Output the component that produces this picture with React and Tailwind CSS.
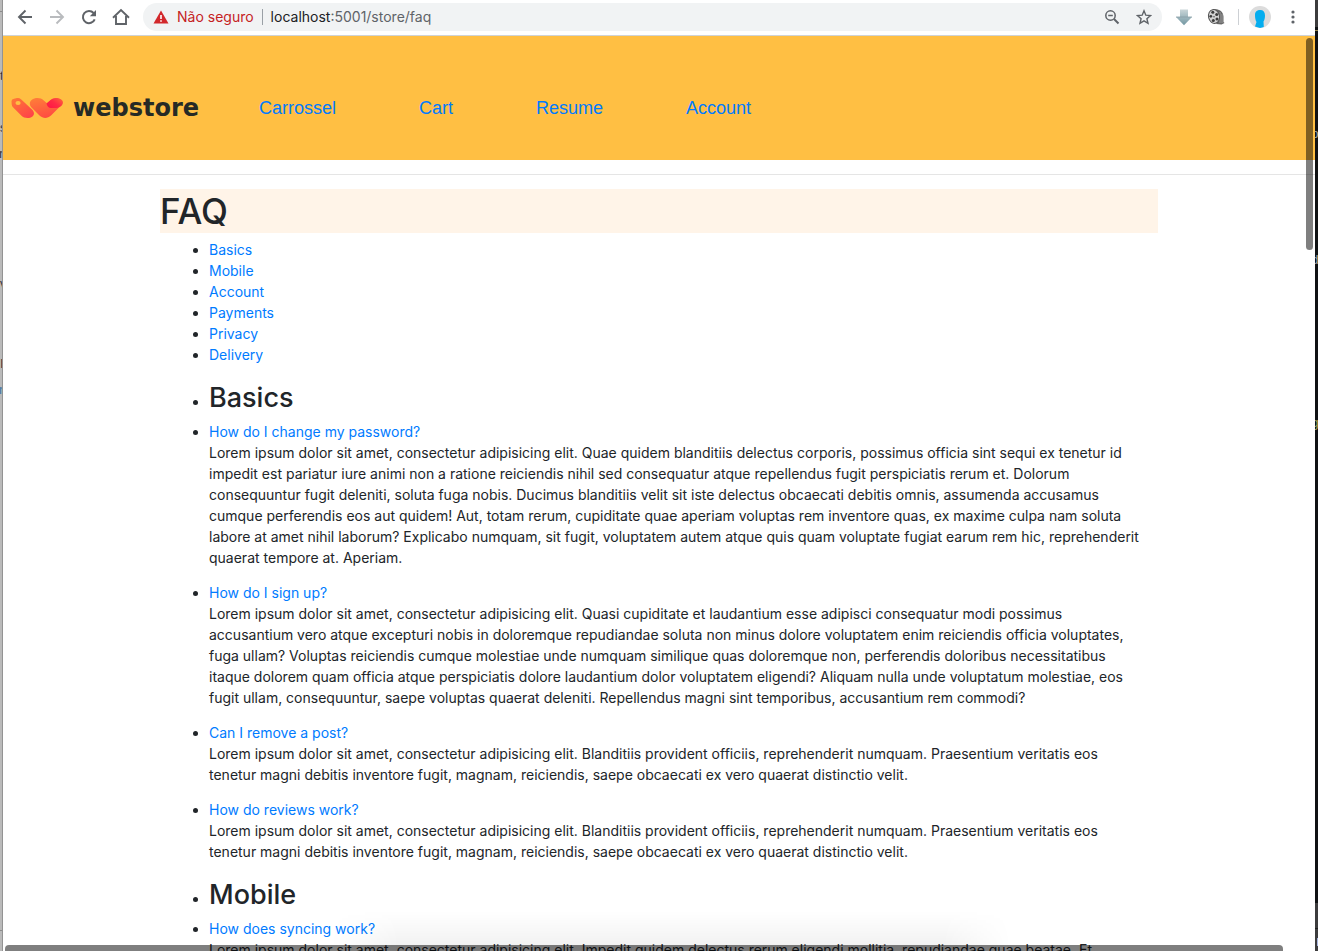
import React from "react";

const topics = ["Basics", "Mobile", "Account", "Payments", "Privacy", "Delivery"];

const navItems = ["Carrossel", "Cart", "Resume", "Account"];

const shortAnswer = [
  "Lorem ipsum dolor sit amet, consectetur adipisicing elit. Blanditiis provident officiis, reprehenderit numquam. Praesentium veritatis eos",
  "tenetur magni debitis inventore fugit, magnam, reiciendis, saepe obcaecati ex vero quaerat distinctio velit.",
];

const sections = [
  {
    title: "Basics",
    entries: [
      {
        question: "How do I change my password?",
        answer: [
          "Lorem ipsum dolor sit amet, consectetur adipisicing elit. Quae quidem blanditiis delectus corporis, possimus officia sint sequi ex tenetur id",
          "impedit est pariatur iure animi non a ratione reiciendis nihil sed consequatur atque repellendus fugit perspiciatis rerum et. Dolorum",
          "consequuntur fugit deleniti, soluta fuga nobis. Ducimus blanditiis velit sit iste delectus obcaecati debitis omnis, assumenda accusamus",
          "cumque perferendis eos aut quidem! Aut, totam rerum, cupiditate quae aperiam voluptas rem inventore quas, ex maxime culpa nam soluta",
          "labore at amet nihil laborum? Explicabo numquam, sit fugit, voluptatem autem atque quis quam voluptate fugiat earum rem hic, reprehenderit",
          "quaerat tempore at. Aperiam.",
        ],
      },
      {
        question: "How do I sign up?",
        answer: [
          "Lorem ipsum dolor sit amet, consectetur adipisicing elit. Quasi cupiditate et laudantium esse adipisci consequatur modi possimus",
          "accusantium vero atque excepturi nobis in doloremque repudiandae soluta non minus dolore voluptatem enim reiciendis officia voluptates,",
          "fuga ullam? Voluptas reiciendis cumque molestiae unde numquam similique quas doloremque non, perferendis doloribus necessitatibus",
          "itaque dolorem quam officia atque perspiciatis dolore laudantium dolor voluptatem eligendi? Aliquam nulla unde voluptatum molestiae, eos",
          "fugit ullam, consequuntur, saepe voluptas quaerat deleniti. Repellendus magni sint temporibus, accusantium rem commodi?",
        ],
      },
      { question: "Can I remove a post?", answer: shortAnswer },
      { question: "How do reviews work?", answer: shortAnswer },
    ],
  },
  {
    title: "Mobile",
    entries: [
      {
        question: "How does syncing work?",
        answer: [
          "Lorem ipsum dolor sit amet, consectetur adipisicing elit. Impedit quidem delectus rerum eligendi mollitia, repudiandae quae beatae. Et",
        ],
      },
    ],
  },
];

function ToolButton({ label, children }) {
  return (
    <button type="button" aria-label={label} className="flex size-6 shrink-0 items-center justify-center">
      {children}
    </button>
  );
}

function BrowserBar() {
  return (
    <div className="flex h-9 shrink-0 items-center border-b border-[#cfd3d6] bg-white px-2.5 pb-0.5 font-[Inter,sans-serif]">
      <div className="flex items-center gap-2">
        <ToolButton label="Back">
          <svg width="16" height="16" viewBox="0 0 16 16" fill="none" stroke="#5f6368" strokeWidth="1.9">
            <path d="M15 8H2.5M8.5 1.5 2 8l6.500 6.500" />
          </svg>
        </ToolButton>
        <ToolButton label="Forward">
          <svg width="16" height="16" viewBox="0 0 16 16" fill="none" stroke="#b9bbbe" strokeWidth="1.9">
            <path d="M1 8h12.500M7.500 1.500 14 8l-6.500 6.500" />
          </svg>
        </ToolButton>
        <ToolButton label="Reload">
          <svg width="16" height="16" viewBox="0 0 16 16" fill="none">
            <path d="M13.700 10.300A6.100 6.100 0 1 1 12.600 4" stroke="#5f6368" strokeWidth="2" />
            <path d="M15 1v6.200H8.800z" fill="#5f6368" />
          </svg>
        </ToolButton>
        <ToolButton label="Home">
          <svg width="18" height="18" viewBox="0 0 18 18" fill="none" stroke="#5f6368" strokeWidth="1.9">
            <path d="M1 9.700 9 2l8 7.700M4 8v8h10V8" />
          </svg>
        </ToolButton>
      </div>
      <div className="ml-2.5 flex h-7 min-w-0 flex-1 items-center rounded-full bg-[#f1f3f4] pr-1.5 pl-2.5">
        <svg width="16" height="14" viewBox="0 0 16 14" className="shrink-0">
          <path d="M8 .5 15.500 13.500H.5z" fill="#d2282c" />
          <path d="M7.200 5h1.600v4H7.200zM7.200 10.200h1.600v1.600H7.200z" fill="#fff" />
        </svg>
        <span className="ml-2 text-sm whitespace-nowrap text-[#c5221f]">Não seguro</span>
        <span className="mx-2 h-4 w-px bg-[#9aa0a6]" />
        <label htmlFor="address" className="text-sm text-[#202124]">
          localhost
        </label>
        <input
          id="address"
          className="min-w-0 flex-1 bg-transparent text-sm text-[#5f6368] outline-none"
          defaultValue=":5001/store/faq"
        />
        <div className="flex items-center gap-2">
          <ToolButton label="Zoom">
            <svg width="16" height="16" viewBox="0 0 16 16" fill="none" stroke="#5f6368" strokeWidth="1.500">
              <circle cx="6.500" cy="6.500" r="4.700" />
              <path d="M4.200 6.500h4.600" />
              <path d="m10 10 4.500 4.500" strokeWidth="1.900" />
            </svg>
          </ToolButton>
          <ToolButton label="Bookmark">
            <svg width="16" height="16" viewBox="0 0 16 16" fill="none" stroke="#5f6368" strokeWidth="1.400">
              <path d="m8 1.800 1.800 4.400 4.700.4-3.600 3.100 1.100 4.600L8 11.800l-4 2.500 1.100-4.600L1.500 6.600l4.700-.4z" />
            </svg>
          </ToolButton>
        </div>
      </div>
      <div className="ml-2.5 flex items-center gap-2">
        <ToolButton label="Downloads">
          <svg width="18" height="18" viewBox="0 0 18 18">
            <defs>
              <linearGradient id="arrow" x1="0" y1="0" x2="0" y2="1">
                <stop offset="0" stopColor="#c9d5d8" />
                <stop offset="1" stopColor="#7297a2" />
              </linearGradient>
            </defs>
            <path d="M5 1.500h8V9h4l-8 8.300L1 9h4z" fill="url(#arrow)" />
            <path d="M1 9h16" stroke="#879da5" strokeWidth=".8" />
          </svg>
        </ToolButton>
        <ToolButton label="Video">
          <svg width="18" height="18" viewBox="0 0 18 18">
            <path d="M6 1.500c5-1 10 1 10.500 7v5.500l1 1-3 1.500-5-.5z" fill="#686868" />
            <path d="M13 4v11M15 6v9" stroke="#aaa" strokeWidth=".8" />
            <ellipse cx="7" cy="8.500" rx="5.500" ry="7" fill="#d2d2d2" stroke="#555" transform="rotate(-12 7 8.500)" />
            <g fill="#3b3b3b">
              <circle cx="5.800" cy="4.300" r="1.500" />
              <circle cx="3.800" cy="8.300" r="1.400" />
              <circle cx="9.700" cy="6.600" r="1.500" />
              <circle cx="6.300" cy="12.500" r="1.500" />
              <circle cx="10" cy="11" r="1.500" />
              <circle cx="7" cy="8.700" r=".7" />
            </g>
          </svg>
        </ToolButton>
      </div>
      <span className="mx-2.5 h-4 w-px bg-[#cdd0d4]" />
      <button type="button" aria-label="Profile" className="shrink-0">
        <svg width="22" height="22" viewBox="0 0 22 22">
          <circle cx="11" cy="11" r="11" fill="#dcdcdc" />
          <path d="M6 9c0-3.500 2-5 5.200-5S16 6 16 9.500c0 3-.7 5-1.500 6l.3 5.500-3.800 1-5-1.500 1.500-4.500C6.500 14.500 6 12 6 9z" fill="#04adef" />
        </svg>
      </button>
      <button type="button" aria-label="Menu" className="ml-2.5 flex size-6 shrink-0 items-center justify-center">
        <svg width="4" height="14" viewBox="0 0 4 14" fill="#5f6368">
          <circle cx="2" cy="2" r="1.600" />
          <circle cx="2" cy="7" r="1.600" />
          <circle cx="2" cy="12" r="1.600" />
        </svg>
      </button>
    </div>
  );
}

function Logo() {
  return (
    <a href="#home" className="flex items-center gap-2.5">
      <svg width="52" height="20" viewBox="0 0 52 20">
        <defs>
          <linearGradient id="tag" x1="0" y1="0" x2="0.700" y2="1">
            <stop offset="0" stopColor="#ff7a35" />
            <stop offset="1" stopColor="#ff4448" />
          </linearGradient>
          <linearGradient id="vee" x1="0" y1="0" x2="0.400" y2="1">
            <stop offset="0" stopColor="#ff8038" />
            <stop offset="1" stopColor="#ff4c42" />
          </linearGradient>
          <linearGradient id="tip" x1="0" y1="0.800" x2="1" y2="0">
            <stop offset="0" stopColor="#ff1744" />
            <stop offset="0.450" stopColor="#ff2a45" />
            <stop offset="1" stopColor="#ff6a3a" />
          </linearGradient>
        </defs>
        <path
          fillRule="evenodd"
          fill="url(#tag)"
          d="M.5 3Q.6 1.300 3 .8L6 0q2-.2 4 1.200L21 11.500c4 4 1.500 8.500-4.500 8.500-2.500 0-4.500-.8-6-2.200L2 9.200Q.8 8 .7 6.500zM7 3a2.600 2 0 1 0 .1 4A2.600 2 0 0 0 7 3z"
        />
        <path d="M20.500 9.500C16.500 5 20 0 26.500 0c2.500 0 4.500.8 6 2.200l3.500 3L40 2c5-4 15-.5 11 4.500L40 17.500c-3.500 3.300-8 3.300-11.500 0z" fill="url(#vee)" />
        <path d="m35.500 5.500 4-3.500C44-2 52 .5 51.700 5c-.2 3.500-4 5-7.700 5h-4c-2.500 0-4-2-4.500-4.500z" fill="url(#tip)" />
      </svg>
      <span className="font-['DejaVu_Sans',sans-serif] text-2xl leading-6 font-bold text-[#262a26]">webstore</span>
    </a>
  );
}

function SiteHeader() {
  return (
    <header className="flex h-31 items-center bg-[#ffbf43] pt-5 pl-2">
      <Logo />
      <nav className="ml-15 flex gap-[83px] font-['Liberation_Sans',sans-serif] text-lg text-[#007bff]">
        {navItems.map((item) => (
          <a key={item} href={`#${item.toLowerCase()}`}>
            {item}
          </a>
        ))}
      </nav>
    </header>
  );
}

function Entry({ question, answer }) {
  return (
    <li className="mb-3.5">
      <a href="#answer" className="text-[#007bff]">
        {question}
      </a>
      <p>
        {answer.map((line) => (
          <span key={line} className="block whitespace-nowrap">
            {line}
          </span>
        ))}
      </p>
    </li>
  );
}

function LeftWindowEdge() {
  return (
    <svg
      className="h-full w-[3px] shrink-0 bg-[#bababa] font-['Liberation_Sans',sans-serif] text-[13px]"
      fill="#35373d"
      aria-hidden="true"
    >
      <path d="M0 11.500h3M0 930.500h3" stroke="#8c8c8c" />
      <text x="0" y="80">t</text>
      <text x="0" y="132">s</text>
      <text x="-1" y="158">r</text>
      <text x="0" y="288">v</text>
      <text x="0" y="368">I</text>
      <text x="-1" y="394" fill="#3f76a3">r</text>
      <path d="M2.500 0v951" stroke="#939393" />
    </svg>
  );
}

function RightWindowEdge() {
  return (
    <svg
      className="h-full w-[3px] shrink-0 bg-[#101214] font-['Liberation_Mono',monospace] text-[13px]"
      fill="#a3a5a7"
      aria-hidden="true"
    >
      <path d="M0 0h3v27H0zM0 903h3v48H0z" fill="#3c3c3d" />
      <path d="M0 30.500h3" stroke="#94864b" />
      <path d="M0 928.500h3" stroke="#1d1d1d" />
      <text x="-4" y="138">p</text>
      <text x="-4" y="264">d</text>
      <text x="-4" y="427" fill="#a8a558">g</text>
      <path d="M2 938h1v8H2z" fill="#a9b6e0" />
    </svg>
  );
}

export default function App() {
  return (
    <div className="flex h-screen overflow-hidden bg-white">
      <LeftWindowEdge />
      <div className="relative flex min-w-0 flex-1 flex-col">
        <BrowserBar />
        <div className="min-h-0 flex-1 overflow-hidden">
          <SiteHeader />
          <hr className="my-3.5 border-[#e5e5e5]" />
          <main className="mx-auto max-w-[998px] font-[Inter,sans-serif] text-sm leading-[21px] text-[#212529]">
            <h1 className="mb-1.5 bg-[#fff4e8] text-[35px] leading-11 font-medium">FAQ</h1>
            <ul className="mb-3.5 list-disc pl-[49px]">
              {topics.map((topic) => (
                <li key={topic}>
                  <a href={`#${topic}`} className="text-[#007bff]">
                    {topic}
                  </a>
                </li>
              ))}
            </ul>
            {sections.map((section) => (
              <ul key={section.title} className="list-disc pl-[49px]">
                <li>
                  <h2 id={section.title} className="mb-1 text-[27px] leading-[38px] font-medium">
                    {section.title}
                  </h2>
                </li>
                {section.entries.map((entry) => (
                  <Entry key={entry.question} {...entry} />
                ))}
              </ul>
            ))}
          </main>
        </div>
        <div className="pointer-events-none absolute inset-x-0 bottom-0 flex h-10 justify-center pr-14 pl-20">
          <div className="w-170 bg-linear-to-t from-black/6 to-transparent mask-x-from-90% mask-x-to-100%" />
        </div>
        <div className="absolute top-[38px] right-0.5 h-[212px] w-[7px] rounded-full bg-black/50" />
        <div className="absolute right-8 bottom-0 left-0.5 h-1.5 rounded-t bg-black/50" />
      </div>
      <RightWindowEdge />
    </div>
  );
}
